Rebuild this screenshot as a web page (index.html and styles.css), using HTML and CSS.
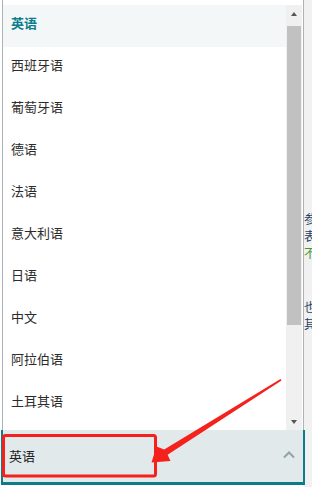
FILE: index.html
```html
<!DOCTYPE html>
<html lang="zh-CN">
<head>
<meta charset="utf-8">
<title>语言选择</title>
<link rel="stylesheet" href="styles.css">
</head>
<body>
<div class="page">
  <div class="page-left"></div>
  <div class="page-right">
    <div class="para para-1">
      <span class="ch">参</span>
      <span class="ch">表</span>
      <span class="ch green">不</span>
    </div>
    <div class="para para-2">
      <span class="ch">也</span>
      <span class="ch">其</span>
    </div>
  </div>

  <div class="dropdown">
    <div class="list-panel">
      <div class="scroll-area">
        <ul class="options">
          <li class="option selected">英语</li>
          <li class="option">西班牙语</li>
          <li class="option">葡萄牙语</li>
          <li class="option">德语</li>
          <li class="option">法语</li>
          <li class="option">意大利语</li>
          <li class="option">日语</li>
          <li class="option">中文</li>
          <li class="option">阿拉伯语</li>
          <li class="option">土耳其语</li>
        </ul>
        <div class="scrollbar">
          <div class="sb-btn"><span class="tri tri-up"></span></div>
          <div class="sb-track"><div class="sb-thumb"></div></div>
          <div class="sb-btn"><span class="tri tri-down"></span></div>
        </div>
      </div>
    </div>
    <div class="select">
      <span class="select-value">英语</span>
      <svg class="chevron" width="12" height="8" viewBox="0 0 12 8"><polyline points="1,6.5 6,1.5 11,6.5" fill="none" stroke="#8ea3aa" stroke-width="2"/></svg>
    </div>
  </div>

  <svg class="annotation" width="312" height="487" viewBox="0 0 312 487">
    <rect x="3.5" y="435.5" width="152" height="40.5" rx="2" fill="none" stroke="#f4211c" stroke-width="3"/>
    <polygon points="281.5,380.5 167.6,454.8 170.5,461 151.5,462.5 156.5,446.5 164.2,449.4 280.5,379" fill="#f4211c"/>
  </svg>
</div>
</body>
</html>
```

FILE: styles.css
```css
* { box-sizing: border-box; }
html, body {
  margin: 0;
  padding: 0;
  background: #ffffff;
}
body {
  font-family: "Noto Sans CJK SC", "Noto Sans", sans-serif;
  font-size: 13px;
  color: #333333;
}
.page {
  position: relative;
  width: 312px;
  height: 487px;
  overflow: hidden;
  display: flex;
}
.page-left {
  width: 304px;
  background: #ffffff;
}
.page-right {
  flex: 1;
  min-width: 0;
  background: #f1f1f1;
  padding-top: 212px;
  white-space: nowrap;
}
.para {
  display: flex;
  flex-direction: column;
  gap: 4px;
}
.ch {
  display: block;
  font-size: 12px;
  line-height: 13px;
  color: #1f3f66;
}
.para-2 { margin-top: 41px; }
.ch.green { color: #3f9a3a; }

/* dropdown overlay */
.dropdown {
  position: absolute;
  left: 1px;
  top: 0;
  width: 304px;
  display: flex;
  flex-direction: column;
}
.list-panel {
  margin-left: 1px;
  width: 302px;
  height: 430px;
  border-left: 1px solid #aab4b8;
  border-right: 1px solid #aab4b8;
  background: #ffffff;
  padding-top: 5px;
}
.scroll-area {
  height: 425px;
  display: flex;
  padding-right: 1px;
}
.options {
  list-style: none;
  margin: 0;
  padding: 0;
  flex: 1;
}
.option {
  height: 42px;
  display: flex;
  align-items: center;
  padding-left: 8px;
  padding-bottom: 7px;
  color: #2b2b2b;
  font-size: 13px;
}
.option.selected {
  background: #f3f7f8;
  color: #0b7d8c;
  font-weight: bold;
}
.scrollbar {
  width: 16px;
  background: #f0f0f0;
  display: flex;
  flex-direction: column;
}
.sb-btn {
  height: 17px;
  display: flex;
  align-items: center;
  justify-content: center;
}
.sb-track {
  flex: 1;
  padding: 4px 1px 0 1px;
}
.sb-thumb {
  height: 299px;
  background: #c1c1c1;
}
.tri {
  width: 0;
  height: 0;
  border-left: 3.5px solid transparent;
  border-right: 3.5px solid transparent;
}
.tri-up { border-bottom: 4px solid #555555; }
.tri-down { border-top: 4px solid #555555; }

.select {
  height: 55px;
  background: #e1e9ea;
  border: 2px solid #0e7c88;
  border-top: none;
  border-bottom-width: 3px;
  display: flex;
  align-items: center;
  justify-content: space-between;
  padding: 0 8px 2px 6px;
}
.select-value {
  font-size: 13px;
  color: #222222;
}
.chevron { display: block; }

.annotation {
  position: absolute;
  left: 0;
  top: 0;
}
```
